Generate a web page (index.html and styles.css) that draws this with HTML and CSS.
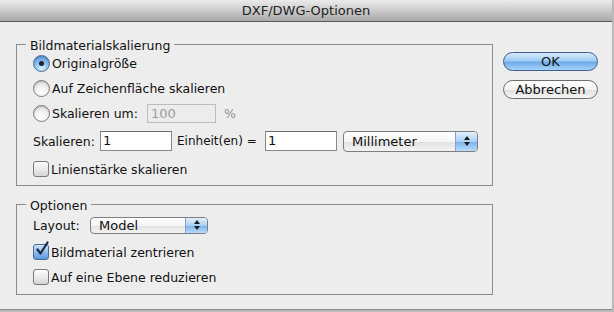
FILE: index.html
```html
<!DOCTYPE html>
<html lang="de">
<head>
<meta charset="utf-8">
<title>DXF/DWG-Optionen</title>
<link rel="stylesheet" href="styles.css">
</head>
<body>
<div class="window">
  <div class="titlebar">DXF/DWG-Optionen</div>
  <div class="content">
    <div class="groups">
      <fieldset class="group group-scale">
        <legend>Bildmaterialskalierung</legend>
        <div class="row row-r1"><span class="radio on"></span><span class="lbl">Originalgröße</span></div>
        <div class="row row-r2"><span class="radio"></span><span class="lbl">Auf Zeichenfläche skalieren</span></div>
        <div class="row row-r3"><span class="radio"></span><span class="lbl lbl-um">Skalieren um:</span><span class="field disabled w-pct">100</span><span class="pct">%</span></div>
        <div class="row row-r4"><span class="lbl-fixed w-sk">Skalieren:</span><span class="field w-num">1</span><span class="lbl-fixed w-eh">Einheit(en) =</span><span class="field w-num">1</span><span class="popup w-unit"><span class="popup-text">Millimeter</span><span class="popup-arrows"><span class="tri up"></span><span class="tri down"></span></span></span></div>
        <div class="row row-r5"><span class="check"></span><span class="lbl">Linienstärke skalieren</span></div>
      </fieldset>
      <fieldset class="group group-opt">
        <legend>Optionen</legend>
        <div class="row row-o1"><span class="lbl-fixed w-lay">Layout:</span><span class="popup w-layout"><span class="popup-text">Model</span><span class="popup-arrows"><span class="tri up"></span><span class="tri down"></span></span></span></div>
        <div class="row row-o2"><span class="check on"><svg class="tick" width="14" height="16" viewBox="0 0 14 16"><path d="M2.5 8.5 L5.5 12.5 L12.5 1.5" fill="none" stroke="#1d2a3c" stroke-width="2.2" stroke-linecap="round" stroke-linejoin="round"/></svg></span><span class="lbl">Bildmaterial zentrieren</span></div>
        <div class="row row-o3"><span class="check"></span><span class="lbl">Auf eine Ebene reduzieren</span></div>
      </fieldset>
    </div>
    <div class="buttons">
      <div class="btn btn-default">OK</div>
      <div class="btn">Abbrechen</div>
    </div>
  </div>
</div>
</body>
</html>
```
FILE: styles.css
```css
html, body {
  margin: 0;
  padding: 0;
}
body {
  width: 614px;
  height: 312px;
  background: #bdbdbd;
  font-family: "DejaVu Sans", "Noto Sans", sans-serif;
  font-size: 12.5px;
  color: #111;
  overflow: hidden;
}
.window {
  width: 612px;
  height: 309px;
  background: #ededed;
  box-shadow: 0 1px 1px #8d8d8d;
  display: flex;
  flex-direction: column;
}
.titlebar {
  height: 21px;
  border-bottom: 1px solid #5a5a5a;
  background: linear-gradient(#ebebeb, #d2d2d2 40%, #a9a9a9);
  text-align: center;
  font-size: 13px;
  line-height: 22px;
  color: #1e1e1e;
}
.content {
  display: flex;
  padding: 13px 0 0 16px;
}
.groups {
  display: flex;
  flex-direction: column;
  width: 477px;
}
.group {
  margin: 0;
  padding: 0 0 0 16px;
  border: 1px solid #8c8c8c;
  min-width: 0;
}
.group legend {
  padding: 4px 4px 0 4px;
  margin-left: -7px;
  line-height: 14px;
  color: #111;
}
.group-scale { padding-bottom: 6px; }
.group-opt { margin-top: 9px; padding-bottom: 7px; }

.row {
  height: 20px;
  display: flex;
  align-items: center;
}
.row-r2, .row-r3 { margin-top: 5px; }
.row-r4, .row-r5 { margin-top: 8px; }
.row-o1 { margin-top: 2px; }
.row-o2 { margin-top: 7px; }
.row-o3 { margin-top: 5px; }

.lbl { margin-left: 2px; white-space: nowrap; }
.lbl-um { width: 95px; }
.lbl-fixed { white-space: nowrap; flex: none; }
.w-sk { width: 67px; }
.w-eh { width: 88px; margin-left: 5px; font-size: 12px; }
.w-lay { width: 57px; }

.radio {
  flex: none;
  width: 15px;
  height: 15px;
  border-radius: 50%;
  border: 1px solid #7a7a7a;
  background: radial-gradient(circle at 50% 80%, #ffffff 0%, #f4f4f4 40%, #cfcfcf 100%);
  box-shadow: inset 0 1px 1px rgba(0,0,0,0.15);
  display: flex;
  align-items: center;
  justify-content: center;
}
.radio.on {
  border-color: #4a6b98;
  background: radial-gradient(circle at 50% 85%, #d8efff 0%, #8fc0ef 45%, #4b86cf 100%);
}
.radio.on::after {
  content: "";
  width: 5px;
  height: 5px;
  border-radius: 50%;
  background: #1a2232;
}

.check {
  flex: none;
  position: relative;
  width: 14px;
  height: 14px;
  border-radius: 3px;
  border: 1px solid #7a7a7a;
  background: linear-gradient(#fdfdfd, #e9e9e9 55%, #d4d4d4);
}
.check.on {
  border-color: #4a6b98;
  background: linear-gradient(#cfe6fb, #8ebdee 50%, #5d9ae0);
}
.tick {
  position: absolute;
  left: 1px;
  top: -4px;
}

.field {
  flex: none;
  box-sizing: border-box;
  height: 20px;
  background: #fff;
  border: 1px solid #8a8a8a;
  border-top-color: #6c6c6c;
  padding-left: 2px;
  line-height: 18px;
  font-size: 13px;
}
.field.disabled {
  height: 19px;
  background: #ececec;
  border-color: #bdbdbd;
  color: #9c9c9c;
  line-height: 17px;
  padding-left: 3px;
}
.w-pct { width: 69px; }
.w-num { width: 72px; }
.pct { margin-left: 8px; color: #8f8f8f; }

.popup {
  flex: none;
  box-sizing: border-box;
  height: 21px;
  display: flex;
  border: 1px solid #7e7e7e;
  border-radius: 4px;
  background: linear-gradient(#ffffff, #f5f5f5 50%, #e3e3e3 55%, #f3f3f3);
  overflow: hidden;
  margin-left: 6px;
}
.w-unit { width: 135px; }
.w-layout { width: 118px; height: 17px; margin-left: 0; }
.popup-text {
  flex: 1;
  padding-left: 8px;
  line-height: 19px;
  font-size: 13px;
}
.w-layout .popup-text { line-height: 15px; }
.popup-arrows {
  flex: none;
  width: 21px;
  border-left: 1px solid #8aa3c4;
  background: linear-gradient(#e2f1ff, #a9d0f5 50%, #7fb5ec 55%, #b9dcfb);
  display: flex;
  flex-direction: column;
  align-items: center;
  justify-content: center;
  gap: 2px;
}
.tri {
  width: 0;
  height: 0;
  border-left: 3px solid transparent;
  border-right: 3px solid transparent;
}
.tri.up { border-bottom: 4px solid #1b1b1b; }
.tri.down { border-top: 4px solid #1b1b1b; }

.buttons {
  display: flex;
  flex-direction: column;
  margin-left: 10px;
  margin-top: 17px;
  gap: 9px;
}
.btn {
  box-sizing: border-box;
  width: 95px;
  height: 19px;
  border-radius: 10px;
  border: 1px solid #6d6d6d;
  background: linear-gradient(#ffffff, #f3f3f3 50%, #e1e1e1 55%, #f6f6f6);
  text-align: center;
  line-height: 17px;
  font-size: 13px;
  color: #111;
}
.btn-default {
  border-color: #3d5f8f;
  background: linear-gradient(#d6ebfd, #9fcbf4 45%, #70aae8 55%, #a6d3fa);
}
```
